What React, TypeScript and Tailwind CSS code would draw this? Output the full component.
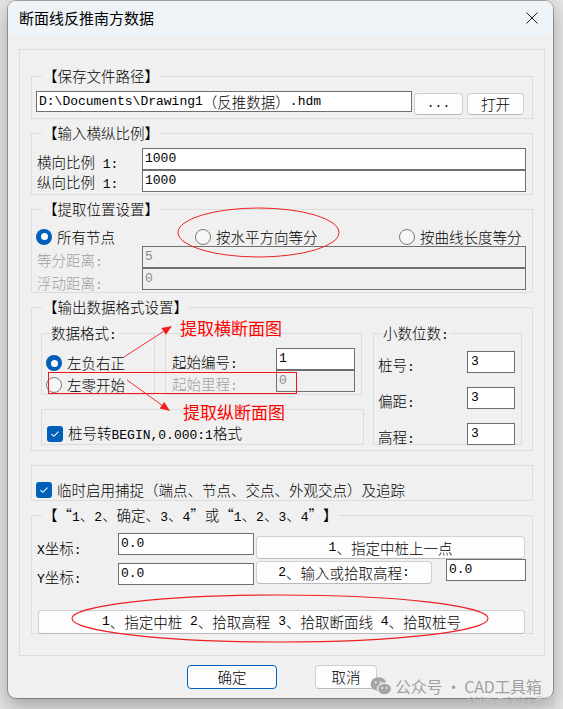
import type { ReactNode } from "react"

const MONO = "font-['Liberation_Mono',monospace] text-[13px] whitespace-pre"

// ASCII runs are drawn half-width in a mono face, like SimSun does;
// curly quotes get a full-width cell
function T({ s }: { s: string }) {
    const parts = s.split(/([\x20-\x7e]+|[“”])/).filter((p) => p !== "")
    return (
        <>
            {parts.map((p, i) => {
                if (p === "“") {
                    return (
                        <span key={i} className="inline-block w-[14.5px] text-right">
                            {p}
                        </span>
                    )
                }
                if (p === "”") {
                    return (
                        <span key={i} className="inline-block w-[14.5px] text-left">
                            {p}
                        </span>
                    )
                }
                return /^[\x20-\x7e]+$/.test(p) ? (
                    <span key={i} className={MONO}>
                        {p}
                    </span>
                ) : (
                    <span key={i}>{p}</span>
                )
            })}
        </>
    )
}

interface GroupProps {
    label?: string
    labelClass?: string
    className?: string
    children?: ReactNode
}

const Group = ({ label, labelClass = "ml-[10px]", className = "", children }: GroupProps) => (
    <div className={`border border-[#dcdcdc] ${className}`}>
        {label && (
            <div className={`-mt-[11px] w-fit bg-[#f0f0f0] px-[1px] leading-[20px] ${labelClass}`}>
                <T s={label} />
            </div>
        )}
        {children}
    </div>
)

const Field = ({ value, className = "", disabled }: { value: string; className?: string; disabled?: boolean }) => (
    <div
        className={`flex shrink-0 items-center overflow-hidden whitespace-nowrap border border-[#6f6f6f] pl-[2px] leading-[20px] ${
            disabled ? "bg-[#f0f0f0] text-[#8c8c8c]" : "bg-white"
        } ${className}`}
    >
        <T s={value} />
    </div>
)

const Btn = ({ children, className = "" }: { children: ReactNode; className?: string }) => (
    <button
        className={`flex shrink-0 items-center justify-center rounded-[4px] border bg-[#fdfdfd] leading-[20px] ${className}`}
    >
        {children}
    </button>
)

const Radio = ({ on }: { on?: boolean }) =>
    on ? (
        <span className="flex h-4 w-4 shrink-0 items-center justify-center rounded-full bg-[#005fb8]">
            <span className="h-[7px] w-[7px] rounded-full bg-white" />
        </span>
    ) : (
        <span className="h-4 w-4 shrink-0 rounded-full border border-[#7a7a7a] bg-[#f7f7f7]" />
    )

const Check = () => (
    <span className="flex h-4 w-4 shrink-0 items-center justify-center rounded-[3px] bg-[#005fb8]">
        <svg width="10" height="8" viewBox="0 0 10 8">
            <path d="M1.5 4.2 L3.8 6.3 L8.5 1.6" fill="none" stroke="white" strokeWidth="1.1" />
        </svg>
    </span>
)

const Label = ({ s, className = "" }: { s: string; className?: string }) => (
    <div className={`shrink-0 leading-[20px] ${className}`}>
        <T s={s} />
    </div>
)

const GRAY_BTN = "border-[#d0d0d0] border-b-[#bababa]"

export default function App() {
    return (
        <div className="relative h-[709px] w-[563px] overflow-hidden bg-[#e2e2e2] pl-[8px] pt-[1px] font-['Noto_Sans_CJK_SC',sans-serif] text-[14.5px] font-light text-black">
            <div className="flex h-[697px] w-[545px] flex-col overflow-hidden rounded-[8px] bg-[#f0f0f0] shadow-[0_0_0_1px_rgba(0,0,0,0.28),0_8px_18px_rgba(0,0,0,0.28)]">
                {/* title bar */}
                <div className="flex h-[36px] shrink-0 items-center justify-between bg-[#eef3f8] pb-[2px] pl-[11px] pr-[15px]">
                    <span className="text-[15px] font-normal leading-[20px]">断面线反推南方数据</span>
                    <svg width="12" height="12" viewBox="0 0 12 12">
                        <path d="M0.5 0.5 L11.5 11.5 M11.5 0.5 L0.5 11.5" stroke="#1b1b1b" strokeWidth="1" />
                    </svg>
                </div>

                {/* body */}
                <div className="ml-[11px] mt-[12px] flex h-[607px] w-[526px] shrink-0 flex-col border border-[#dcdcdc] pl-[11px]">
                    <Group label="【保存文件路径】" className="mt-[26px] h-[43px] w-[502px]">
                        <div className="ml-[4px] mt-[5px] flex items-start">
                            <Field value="D:\Documents\Drawing1（反推数据）.hdm" className="h-[21px] w-[376px] pl-[1px]" />
                            <Btn className={`ml-[2px] mt-[2px] h-[22px] w-[49px] ${GRAY_BTN}`}>
                                <T s="..." />
                            </Btn>
                            <Btn className={`ml-[4px] mt-[2px] h-[22px] w-[57px] ${GRAY_BTN}`}>打开</Btn>
                        </div>
                    </Group>

                    <Group label="【输入横纵比例】" className="mt-[14px] h-[62px] w-[502px]">
                        <div className="mt-[5px] flex h-[22px]">
                            <Label s="横向比例 1:" className="w-[110px] pl-[5px] pt-[4px]" />
                            <Field value="1000" className="h-[22px] w-[384px]" />
                        </div>
                        <div className="flex h-[22px]">
                            <Label s="纵向比例 1:" className="w-[110px] pl-[5px] pt-[2px]" />
                            <Field value="1000" className="h-[22px] w-[384px]" />
                        </div>
                    </Group>

                    <Group label="【提取位置设置】" className="mt-[14px] h-[84px] w-[502px]">
                        <div className="mt-[8px] flex h-[19px] items-center pl-[4px]">
                            <div className="flex w-[159px] items-center gap-[5px]">
                                <Radio on />
                                <span className="leading-[20px]">所有节点</span>
                            </div>
                            <div className="flex w-[204px] items-center gap-[5px]">
                                <Radio />
                                <span className="leading-[20px]">按水平方向等分</span>
                            </div>
                            <div className="flex items-center gap-[5px]">
                                <Radio />
                                <span className="leading-[20px]">按曲线长度等分</span>
                            </div>
                        </div>
                        <div className="flex h-[22px]">
                            <Label s="等分距离:" className="w-[110px] pl-[5px] pt-[4px] text-[#a0a0a0]" />
                            <Field value="5" disabled className="h-[22px] w-[384px]" />
                        </div>
                        <div className="flex h-[22px]">
                            <Label s="浮动距离:" className="w-[110px] pl-[5px] pt-[5px] text-[#a0a0a0]" />
                            <Field value="0" disabled className="h-[22px] w-[384px]" />
                        </div>
                    </Group>

                    <Group label="【输出数据格式设置】" className="mt-[14px] h-[144px] w-[502px]">
                        <div className="ml-[9px] mt-[16px] flex">
                            <div className="flex w-[323px] flex-col">
                                <div className="flex">
                                    <Group label="数据格式:" labelClass="ml-[8px]" className="h-[62px] w-[114px]">
                                        <div className="mt-[7px] flex h-[20px] items-center gap-[5px] pl-[4px]">
                                            <Radio on />
                                            <span className="leading-[20px]">左负右正</span>
                                        </div>
                                        <div className="mt-[2px] flex h-[20px] items-center gap-[5px] pl-[4px]">
                                            <Radio />
                                            <span className="leading-[20px]">左零开始</span>
                                        </div>
                                    </Group>
                                    <Group className="ml-[10px] h-[62px] w-[197px]">
                                        <div className="mt-[14px] flex h-[22px]">
                                            <Label s="起始编号:" className="w-[110px] pl-[6px] pt-[4px]" />
                                            <Field value="1" className="h-[22px] w-[79px]" />
                                        </div>
                                        <div className="flex h-[22px]">
                                            <Label s="起始里程:" className="w-[110px] pl-[6px] pt-[4px] text-[#a0a0a0]" />
                                            <Field value="0" disabled className="h-[22px] w-[79px]" />
                                        </div>
                                    </Group>
                                </div>
                                <Group className="mt-[14px] h-[36px] w-[323px]">
                                    <div className="mt-[14px] flex h-[20px] items-center gap-[5px] pl-[5px]">
                                        <Check />
                                        <span className="leading-[20px]">
                                            <T s="桩号转BEGIN,0.000:1格式" />
                                        </span>
                                    </div>
                                </Group>
                            </div>
                            <Group label="小数位数:" labelClass="ml-[8px]" className="ml-[9px] h-[112px] w-[149px]">
                                {[
                                    ["桩号:", "mt-[5px]"],
                                    ["偏距:", "mt-[14px]"],
                                    ["高程:", "mt-[14px]"],
                                ].map(([name, mt]) => (
                                    <div key={name} className={`flex h-[22px] ${mt}`}>
                                        <Label s={name} className="w-[93px] pl-[4px] pt-[4px]" />
                                        <Field value="3" className="h-[22px] w-[48px] pl-[3px]" />
                                    </div>
                                ))}
                            </Group>
                        </div>
                    </Group>

                    <Group className="mt-[14px] h-[36px] w-[502px]">
                        <div className="mt-[14px] flex h-[20px] items-center gap-[5px] pl-[4px]">
                            <Check />
                            <span className="leading-[20px]">临时启用捕捉（端点、节点、交点、外观交点）及追踪</span>
                        </div>
                    </Group>

                    <Group label="【“1、2、确定、3、4”或“1、2、3、4”】" className="mt-[14px] h-[119px] w-[502px]">
                        <div className="mt-[5px] flex h-[26px] items-start">
                            <Label s="X坐标:" className="w-[86px] pl-[5px] pt-[5px]" />
                            <Field value="0.0" className="h-[22px] w-[136px]" />
                            <Btn className={`ml-[2px] mt-[3px] h-[23px] w-[269px] ${GRAY_BTN}`}>
                                <T s="1、指定中桩上一点" />
                            </Btn>
                        </div>
                        <div className="flex h-[26px] items-start">
                            <Label s="Y坐标:" className="w-[86px] pl-[5px] pt-[8px]" />
                            <Field value="0.0" className="mt-[4px] h-[22px] w-[136px]" />
                            <Btn className={`ml-[2px] mt-[2px] h-[23px] w-[176px] ${GRAY_BTN}`}>
                                <T s="2、输入或拾取高程:" />
                            </Btn>
                            <Field value="0.0" className="ml-[14px] h-[22px] w-[80px]" />
                        </div>
                        <Btn className={`ml-[6px] mt-[25px] h-[24px] w-[487px] ${GRAY_BTN}`}>
                            <T s="1、指定中桩 2、拾取高程 3、拾取断面线 4、拾取桩号" />
                        </Btn>
                    </Group>
                </div>

                <div className="mt-[9px] flex pl-[179px]">
                    <Btn className="h-[24px] w-[90px] border-[#005fb8]">确定</Btn>
                    <Btn className={`ml-[38px] h-[24px] w-[62px] ${GRAY_BTN}`}>取消</Btn>
                </div>
            </div>

            {/* red annotations drawn over the screenshot */}
            <svg className="pointer-events-none absolute left-0 top-0" width="563" height="709" viewBox="0 0 563 709">
                <ellipse cx="258.5" cy="232.5" rx="80.5" ry="24.5" fill="none" stroke="#f02020" strokeWidth="1" />
                <ellipse cx="280" cy="618.5" rx="208" ry="23.5" fill="none" stroke="#f02020" strokeWidth="1.2" />
                <rect x="48.5" y="372.5" width="248" height="21" fill="none" stroke="#f01818" strokeWidth="1" />
                <path d="M124 357 L163.6 331.4" stroke="#f03030" strokeWidth="1" />
                <polygon points="172,326 165.8,334.8 161.4,328" fill="#f02020" />
                <path d="M127 380 L161.9 405.2" stroke="#f03030" strokeWidth="1" />
                <polygon points="170,411 159.6,408.4 164.2,402" fill="#f02020" />
            </svg>
            <span className="pointer-events-none absolute left-[180px] top-[318px] text-[17px] font-normal leading-[20px] text-[#ff0000]">
                提取横断面图
            </span>
            <span className="pointer-events-none absolute left-[183px] top-[402px] text-[17px] font-normal leading-[20px] text-[#ff0000]">
                提取纵断面图
            </span>

            {/* watermark */}
            <div className="pointer-events-none absolute left-[370px] top-[676px] flex items-center gap-[3px] text-[16px] font-normal leading-[18px] text-[#8a8a8a]/80">
                <svg width="22" height="20" viewBox="0 0 22 20">
                    <ellipse cx="8.5" cy="8" rx="8" ry="6.8" fill="#a5a5a5" />
                    <ellipse cx="14.5" cy="13" rx="7" ry="5.8" fill="#a5a5a5" stroke="#f0f0f0" strokeWidth="1.2" />
                    <circle cx="5.8" cy="6.5" r="1" fill="#f0f0f0" />
                    <circle cx="10.6" cy="6.5" r="1" fill="#f0f0f0" />
                    <circle cx="12.3" cy="12" r="0.9" fill="#f0f0f0" />
                    <circle cx="16.6" cy="12" r="0.9" fill="#f0f0f0" />
                </svg>
                <span className="tracking-[-0.3px]">公众号 · CAD工具箱</span>
            </div>
            <span className="pointer-events-none absolute left-[467px] top-[695px] text-[10px] font-normal leading-[11px] text-[#c4c4c4]">
                CSDN @CAD工具箱
            </span>
        </div>
    )
}
